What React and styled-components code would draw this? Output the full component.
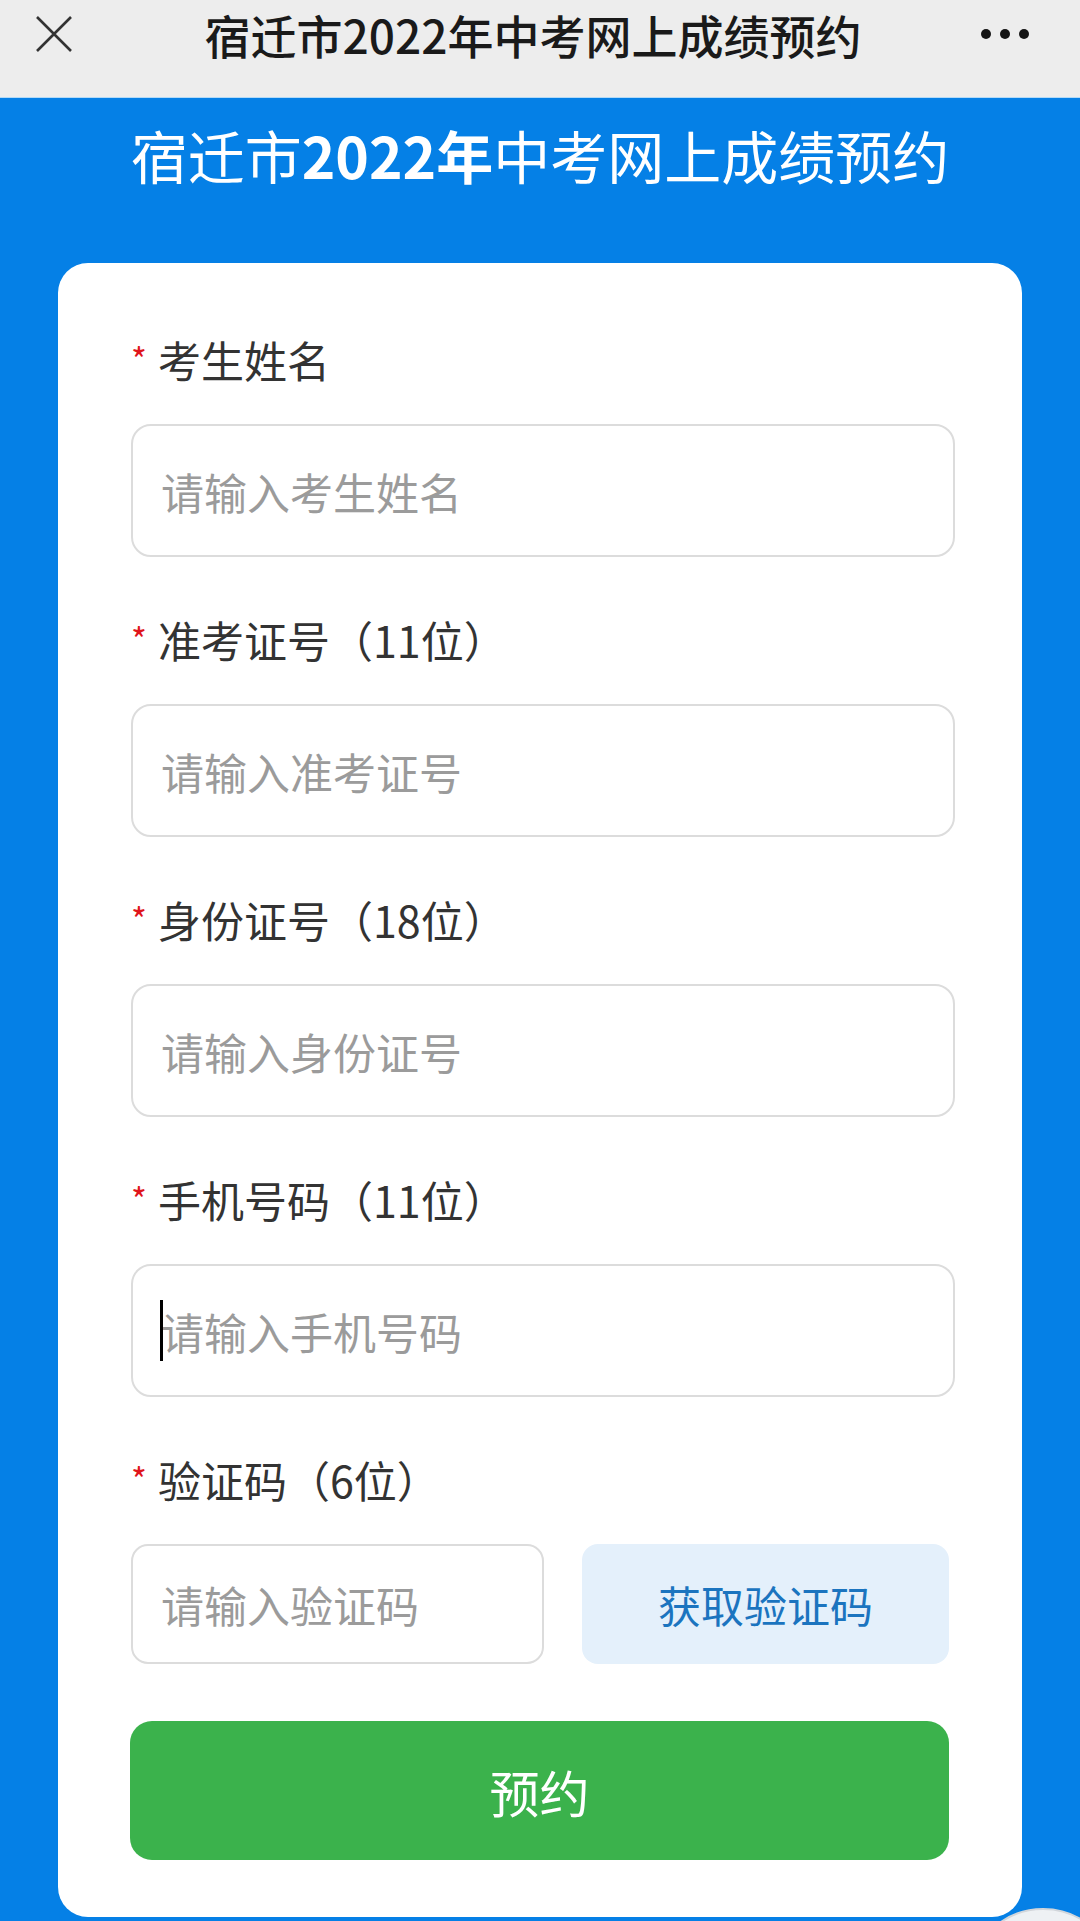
import React from "react";
import styled, { createGlobalStyle } from "styled-components";

const GlobalStyle = createGlobalStyle`
  html, body { margin: 0; padding: 0; }
  body {
    background: #0580e6;
    font-family: "Noto Sans CJK SC", "Noto Sans", sans-serif;
  }
  * { box-sizing: border-box; }
`;

const Page = styled.div`
  position: relative;
  width: 1080px;
  min-height: 1921px;
  background: #0580e6;
  overflow: hidden;
`;

const TopBar = styled.header`
  height: 98px;
  background: #ededed;
  border-bottom: 1px solid #b3daf7;
`;

const TopRow = styled.div`
  display: grid;
  grid-template-columns: 120px 1fr 120px;
  align-items: center;
  height: 68px;
`;

const IconButton = styled.div`
  display: flex;
  align-items: center;
  justify-content: ${(p) => (p.$right ? "flex-end" : "flex-start")};
  padding: ${(p) => (p.$right ? "0 41px 0 0" : "0 0 0 34px")};
`;

const BarTitle = styled.h1`
  margin: 0;
  padding-right: 14px;
  text-align: center;
  font-size: 46px;
  line-height: 68px;
  font-weight: 500;
  color: #1a1a1a;
  white-space: nowrap;
`;

const Heading = styled.h2`
  margin: 0;
  padding: 16px 0 69px;
  text-align: center;
  font-size: 57px;
  line-height: 80px;
  font-weight: 400;
  color: #ffffff;
  white-space: nowrap;
  b { font-weight: 700; }
`;

const Card = styled.form`
  margin: 0 58px;
  padding: 66px 0 57px 73px;
  background: #ffffff;
  border-radius: 30px;
`;

const Field = styled.div`
  display: flex;
  flex-direction: column;
  margin-bottom: 52px;
`;

const Label = styled.label`
  display: block;
  height: 60px;
  margin-bottom: 35px;
  font-size: 43px;
  line-height: 60px;
  color: #333333;
  white-space: nowrap;
`;

const Star = styled.span`
  display: inline-block;
  width: 27px;
  font-size: 34px;
  color: #e0141c;
  vertical-align: 5px;
`;

const InputWrap = styled.div`
  position: relative;
  width: ${(p) => p.$w}px;
`;

const TextInput = styled.input`
  display: block;
  width: 100%;
  height: ${(p) => p.$h}px;
  padding: 0 28px;
  border: 2px solid #dcdcdc;
  border-radius: ${(p) => p.$r}px;
  background: #ffffff;
  font-family: "Noto Sans CJK SC", "Noto Sans", sans-serif;
  font-size: 43px;
  color: #333333;
  outline: none;
  &::placeholder { color: #9b9b9b; }
`;

const Caret = styled.span`
  position: absolute;
  left: 29px;
  top: 36px;
  width: 3px;
  height: 61px;
  background: #000000;
`;

const CodeRow = styled.div`
  display: grid;
  grid-template-columns: 413px 367px;
  column-gap: 38px;
  width: 818px;
`;

const CodeButton = styled.button`
  height: 120px;
  border: none;
  border-radius: 16px;
  background: #e4f0fb;
  color: #1b74bf;
  font-family: "Noto Sans CJK SC", "Noto Sans", sans-serif;
  font-size: 43px;
`;

const Submit = styled.button`
  display: block;
  width: 819px;
  height: 139px;
  margin: 57px 0 0 -1px;
  border: none;
  border-radius: 22px;
  background: #3bb24c;
  color: #ffffff;
  font-family: "Noto Sans CJK SC", "Noto Sans", sans-serif;
  font-size: 50px;
`;

const FloatBall = styled.div`
  position: absolute;
  left: 968px;
  top: 1908px;
  width: 150px;
  height: 150px;
  border-radius: 50%;
  background: #eef1f4;
  border: 2px solid #d2d6db;
`;

const fields = [
  { label: "考生姓名", ph: "请输入考生姓名" },
  { label: "准考证号（11位）", ph: "请输入准考证号" },
  { label: "身份证号（18位）", ph: "请输入身份证号" },
  { label: "手机号码（11位）", ph: "请输入手机号码", caret: true },
];

export default function App() {
  return (
    <Page>
      <GlobalStyle />
      <TopBar>
        <TopRow>
          <IconButton>
            <svg width="40" height="40" viewBox="0 0 40 40">
              <path d="M3 3L37 37M37 3L3 37" stroke="#333" strokeWidth="2.6" fill="none" />
            </svg>
          </IconButton>
          <BarTitle>宿迁市2022年中考网上成绩预约</BarTitle>
          <IconButton $right>
            <svg width="58" height="12" viewBox="0 0 58 12">
              <circle cx="5" cy="6" r="5" fill="#151515" />
              <circle cx="24" cy="6" r="5" fill="#151515" />
              <circle cx="43" cy="6" r="5" fill="#151515" />
            </svg>
          </IconButton>
        </TopRow>
      </TopBar>
      <Heading>
        宿迁市<b>2022年</b>中考网上成绩预约
      </Heading>
      <Card onSubmit={(e) => e.preventDefault()}>
        {fields.map((f) => (
          <Field key={f.label}>
            <Label>
              <Star>*</Star>
              {f.label}
            </Label>
            <InputWrap $w={824}>
              <TextInput $h={133} $r={20} placeholder={f.ph} />
              {f.caret && <Caret />}
            </InputWrap>
          </Field>
        ))}
        <Label>
          <Star>*</Star>验证码（6位）
        </Label>
        <CodeRow>
          <InputWrap $w={413}>
            <TextInput $h={120} $r={17} placeholder="请输入验证码" />
          </InputWrap>
          <CodeButton type="button">获取验证码</CodeButton>
        </CodeRow>
        <Submit type="submit">预约</Submit>
      </Card>
      <FloatBall />
    </Page>
  );
}
